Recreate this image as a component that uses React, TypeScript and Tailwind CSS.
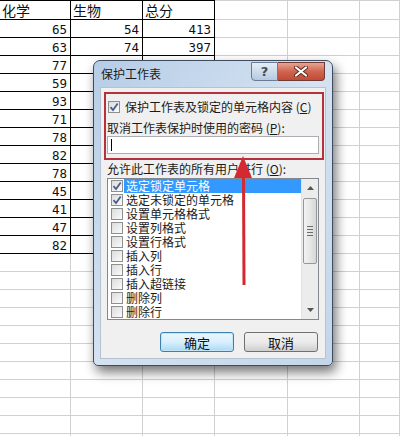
const colW = ["w-[71px]", "w-[72px]", "w-[72px]", "w-[73px]", "w-[72px]", "w-[40px]"]

const header = ["化学", "生物", "总分"]

// rows past the second are covered by the dialog in columns 2 and 3
const rows: (number | null)[][] = [
  [65, 54, 413],
  [63, 74, 397],
  [77, null, null],
  [59, null, null],
  [93, null, null],
  [71, null, null],
  [78, null, null],
  [82, null, null],
  [78, null, null],
  [45, null, null],
  [41, null, null],
  [47, null, null],
  [82, null, null],
]

const perms = [
  { label: "选定锁定单元格", checked: true, active: true },
  { label: "选定未锁定的单元格", checked: true },
  { label: "设置单元格格式" },
  { label: "设置列格式" },
  { label: "设置行格式" },
  { label: "插入列" },
  { label: "插入行" },
  { label: "插入超链接" },
  { label: "删除列" },
  { label: "删除行" },
]

const EXTRA_ROWS = 11

function Check({ checked }: { checked?: boolean }) {
  return (
    <span className="w-[12px] h-[12px] border border-[#8e8f8f] bg-gradient-to-br from-[#dcdcdc] to-[#fbfbfb] flex items-center justify-center shrink-0">
      {checked && (
        <svg width="10" height="10" viewBox="0 0 10 10">
          <path d="M1.5 5.2 L4 8 L8.7 1.5" fill="none" stroke="#4a5f8c" strokeWidth="1.8" />
        </svg>
      )}
    </span>
  )
}

function Sheet() {
  const total = 1 + rows.length + EXTRA_ROWS
  return (
    <div className="flex flex-col font-['DejaVu_Sans_Mono',monospace] text-[12.5px] text-[#111]">
      {Array.from({ length: total }).map((_, r) => (
        <div key={r} className={r === 0 ? "flex h-[20px] shrink-0" : "flex h-[18px] shrink-0"}>
          {colW.map((w, c) => {
            const dark = c < 3 && r <= rows.length
            const top = r === 0 ? (c < 3 ? " border-t border-t-black" : " border-t border-t-[#d0d0d0]") : ""
            const bottom = dark ? " border-b border-b-black" : " border-b border-b-[#d0d0d0]"
            const right = dark ? " border-r border-r-black" : " border-r border-r-[#d0d0d0]"
            if (r === 0) {
              return (
                <div key={c} className={w + " shrink-0 flex items-center pl-[2px] font-['Noto_Sans_CJK_SC',sans-serif] text-[14px] leading-none" + top + bottom + right}>
                  {header[c] ?? ""}
                </div>
              )
            }
            const val = r <= rows.length && c < 3 ? rows[r - 1][c] ?? "" : ""
            return (
              <div key={c} className={w + " shrink-0 flex items-end justify-end pr-[3px] pb-[1px] leading-none" + bottom + right}>
                {val}
              </div>
            )
          })}
        </div>
      ))}
    </div>
  )
}

function Dialog() {
  return (
    <div className="absolute left-[93px] top-[60px] w-[240px] h-[306px] rounded-t-[7px] rounded-b-[5px] border border-[#3d4c5e] bg-gradient-to-br from-[#b6cde6] via-[#d4e2f1] to-[#c3d6ea] shadow-[3px_6px_12px_rgba(0,0,0,0.55)] flex flex-col px-[6px] pb-[6px] font-['Noto_Sans_CJK_SC',sans-serif] text-[12px] text-[#1a1a1a]">
      {/* title bar */}
      <div className="h-[26px] shrink-0 flex items-center pl-[1px] text-[12px] text-[#1b1b1b]">保护工作表</div>

      {/* caption buttons */}
      <div className="absolute top-[1px] right-[7px] flex h-[19px]">
        <div className="w-[27px] h-full rounded-bl-[4px] border border-[#6b7c92] bg-gradient-to-b from-[#e4edf7] via-[#cddcec] to-[#b5c9df] flex items-center justify-center text-[13px] font-bold text-[#3f4c5c] font-['DejaVu_Sans',sans-serif] leading-none">
          ?
        </div>
        <div className="w-[47px] h-full rounded-br-[4px] border border-l-0 border-[#6e3a33] bg-gradient-to-b from-[#e6a494] via-[#d0644f] to-[#c24a35] flex items-center justify-center">
          <svg width="14" height="11" viewBox="0 0 14 11">
            <path d="M2 1.5 L12 9.5 M12 1.5 L2 9.5" stroke="#5a2a22" strokeWidth="4" strokeLinecap="round" />
            <path d="M2 1.5 L12 9.5 M12 1.5 L2 9.5" stroke="#ffffff" strokeWidth="2.2" strokeLinecap="round" />
          </svg>
        </div>
      </div>

      {/* content */}
      <div className="flex-1 bg-[#f0f0f0] border border-[#b4c2d2] flex flex-col px-[6px] pt-[12px]">
        <div className="h-[14px] flex items-center gap-[5px] pl-[1px]">
          <Check checked />
          <span className="leading-none">
            保护工作表及锁定的单元格内容 (<span className="underline">C</span>)
          </span>
        </div>
        <div className="mt-[7px] h-[14px] flex items-center leading-none">
          取消工作表保护时使用的密码 (<span className="underline">P</span>):
        </div>
        <div className="mt-[1px] h-[18px] bg-white border border-[#abadb3] flex items-center pl-[3px]">
          <span className="w-[1px] h-[12px] bg-black" />
        </div>
        <div className="mt-[8px] h-[14px] flex items-center leading-none">
          允许此工作表的所有用户进行 (<span className="underline">O</span>):
        </div>

        {/* list box */}
        <div className="mt-[2px] h-[142px] bg-white border border-[#828790] relative">
          {perms.map((p) => (
            <div key={p.label} className="h-[14px] flex items-center pl-[3px]">
              <Check checked={p.checked} />
              <span
                className={
                  p.active
                    ? "ml-[1px] h-[14px] w-[177px] bg-[#3399ff] text-white flex items-center pl-[2px] leading-none"
                    : "ml-[1px] h-[14px] flex items-center pl-[2px] leading-none"
                }
              >
                {p.label}
              </span>
            </div>
          ))}

          {/* scroll bar */}
          <div className="absolute right-0 top-0 bottom-0 w-[17px] bg-[#ececec] border-l border-[#e2e2e2]">
            <div className="h-[18px] flex items-center justify-center">
              <svg width="7" height="4" viewBox="0 0 7 4">
                <path d="M0 4 L3.5 0 L7 4 Z" fill="#555" />
              </svg>
            </div>
            <div className="mx-[1px] mt-[1px] h-[66px] rounded-[2px] border border-[#979797] bg-gradient-to-r from-[#f3f3f3] via-[#e6e6e6] to-[#d6d6d6] flex flex-col items-center justify-center gap-[2px]">
              <span className="w-[6px] h-[1px] bg-[#6d6d6d]" />
              <span className="w-[6px] h-[1px] bg-[#6d6d6d]" />
              <span className="w-[6px] h-[1px] bg-[#6d6d6d]" />
              <span className="w-[6px] h-[1px] bg-[#6d6d6d]" />
            </div>
            <div className="absolute bottom-0 left-0 right-0 h-[18px] flex items-center justify-center">
              <svg width="7" height="4" viewBox="0 0 7 4">
                <path d="M0 0 L3.5 4 L7 0 Z" fill="#555" />
              </svg>
            </div>
          </div>
        </div>

        {/* buttons */}
        <div className="mt-[12px] h-[20px] flex justify-end gap-[10px] pr-[1px]">
          <button className="w-[74px] h-[20px] rounded-[3px] border border-[#3c7fb1] bg-gradient-to-b from-[#eaf6fd] via-[#d9f0fc] to-[#a7d9f5] shadow-[inset_0_0_0_1px_#c4e5f6] text-[13px] leading-none text-[#111]">
            确定
          </button>
          <button className="w-[74px] h-[20px] rounded-[3px] border border-[#707070] bg-gradient-to-b from-[#f2f2f2] via-[#ebebeb] to-[#cfcfcf] text-[13px] leading-none text-[#111]">
            取消
          </button>
        </div>
      </div>

      {/* annotation box */}
      <div className="absolute left-[10px] top-[31px] w-[220px] h-[68px] border-2 border-[#b3323c]" />
    </div>
  )
}

export default function App() {
  return (
    <div className="relative w-[400px] h-[436px] overflow-hidden bg-white">
      <Sheet />
      <Dialog />
      <svg className="absolute left-[230px] top-[150px]" width="30" height="140" viewBox="0 0 30 140">
        <path d="M13.5 24 L14 135" stroke="#d42a2f" strokeWidth="3" />
        <path d="M13 6 L4 28 L22 28 Z" fill="#d42a2f" />
      </svg>
    </div>
  )
}
